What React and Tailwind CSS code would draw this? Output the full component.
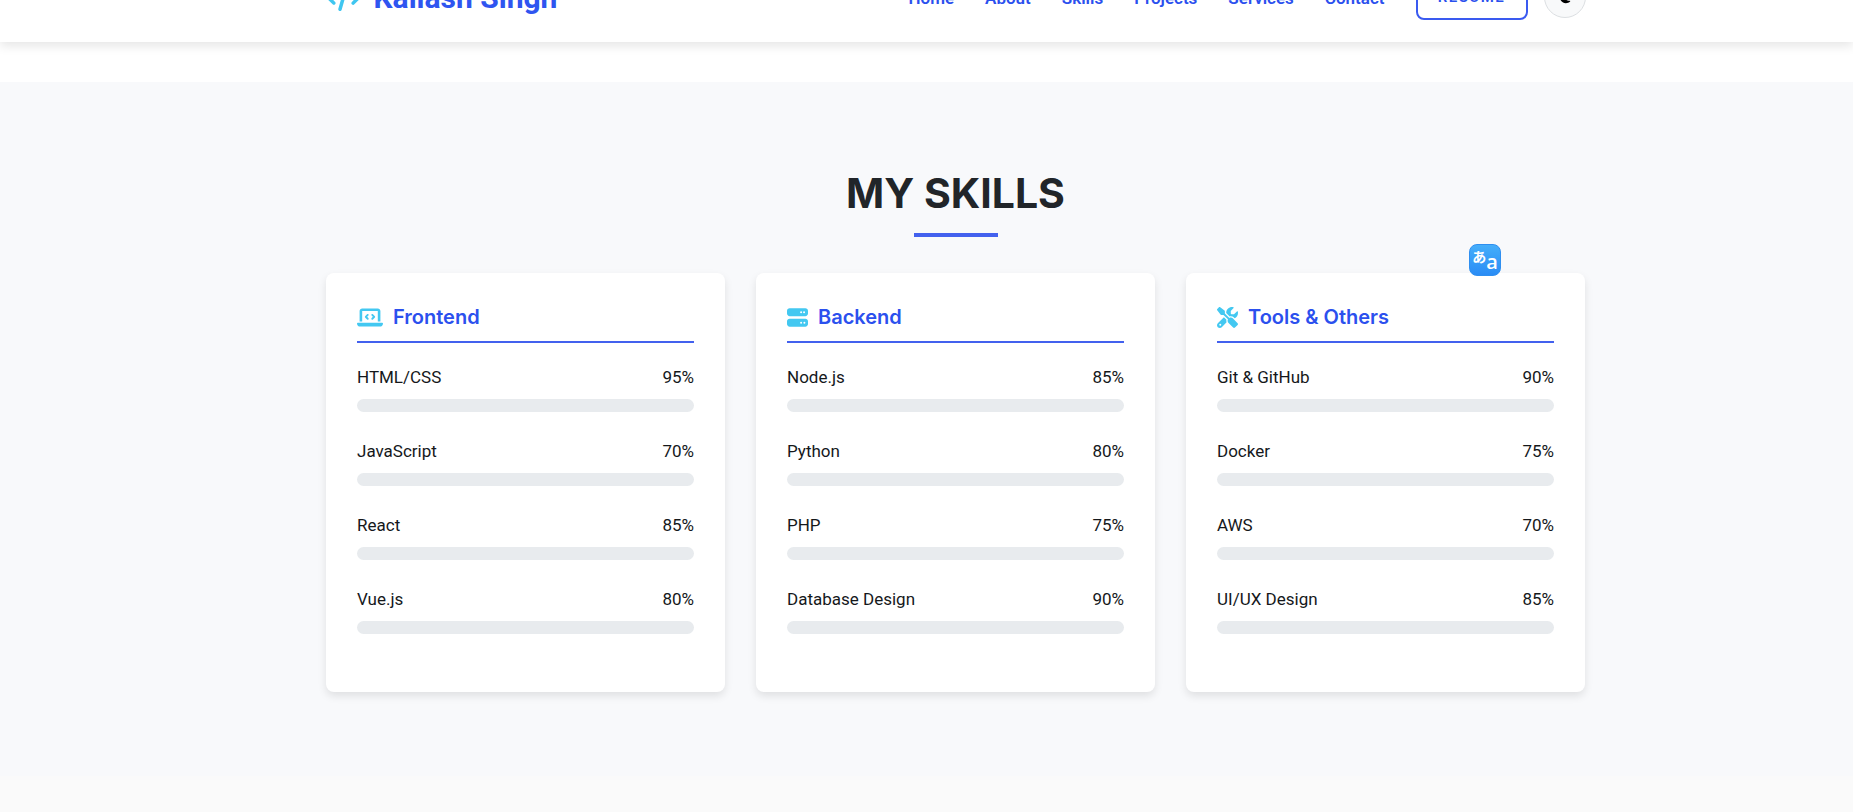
import { FaCode, FaMoon, FaLaptopCode, FaServer, FaScrewdriverWrench } from "react-icons/fa6";

const links = ["Home", "About", "Skills", "Projects", "Services", "Contact"];

const groups = [
  {
    title: "Frontend",
    Icon: FaLaptopCode,
    iconClass: "h-[21px] w-[26px]",
    skills: [["HTML/CSS", 95], ["JavaScript", 70], ["React", 85], ["Vue.js", 80]],
  },
  {
    title: "Backend",
    Icon: FaServer,
    iconClass: "size-[21px]",
    skills: [["Node.js", 85], ["Python", 80], ["PHP", 75], ["Database Design", 90]],
  },
  {
    title: "Tools & Others",
    Icon: FaScrewdriverWrench,
    iconClass: "size-[21px]",
    skills: [["Git & GitHub", 90], ["Docker", 75], ["AWS", 70], ["UI/UX Design", 85]],
  },
];

function Header() {
  return (
    <header className="relative -mt-12 bg-white pl-[58px] shadow-[0_4px_10px_rgba(0,0,0,0.1)]">
      <div className="mx-auto flex h-[90px] max-w-[1260px] items-center justify-between">
        <a href="#home" className="flex items-center gap-[13px] text-[30px] font-bold text-[#2f55f0]">
          <FaCode className="h-7 w-[35px] text-[#3fc6f0]" />
          Kailash Singh
        </a>
        <div className="flex items-center">
          <nav className="flex gap-[31px] pt-px text-[17px] leading-6 font-semibold text-[#2b50ee]">
            {links.map((l) => (
              <a key={l} href={"#" + l.toLowerCase()}>{l}</a>
            ))}
          </nav>
          <a
            href="#resume"
            className="ml-[31px] flex h-[46px] w-28 items-center justify-center rounded-lg border-2 border-[#3a5af0] text-[15px] font-semibold tracking-widest text-[#2b50ee]"
          >
            RESUME
          </a>
          <button
            type="button"
            aria-label="Toggle theme"
            className="ml-4 flex size-[42px] items-center justify-center rounded-full border border-[#dcdfe2] bg-[#f8f9fa] text-black"
          >
            <FaMoon className="size-3.5" />
          </button>
        </div>
      </div>
    </header>
  );
}

function TranslateButton() {
  return (
    <button
      type="button"
      aria-label="Translate"
      className="absolute -top-[29px] right-[84px] flex size-8 items-center justify-center rounded-lg border border-[#2f8ff0] bg-linear-to-b from-[#45aefa] to-[#2a8cf5] text-white"
    >
      <span className="mb-2 font-['Noto_Sans_CJK_JP',sans-serif] text-[14px] leading-[14px] font-bold">あ</span>
      <span className="mt-1 font-['Open_Sans',sans-serif] text-[20px] leading-4 font-semibold">a</span>
    </button>
  );
}

function Skill({ name, value }) {
  return (
    <div className="mb-[26px]">
      <div className="mb-2 flex justify-between text-[17px] leading-[27px] text-[#15181b]">
        <span>{name}</span>
        <span>{value}%</span>
      </div>
      <div role="progressbar" aria-label={name} aria-valuenow={value} className="h-[13px] rounded-full bg-[#e8ebee]" />
    </div>
  );
}

function Card({ title, Icon, iconClass, skills, children }) {
  return (
    <article className="relative rounded-lg bg-white px-[31px] pt-[31px] pb-8 shadow-[0_4px_8px_rgba(0,0,0,0.1)]">
      <h3 className="mb-[21px] flex items-center gap-[10px] border-b-2 border-[#4361ee] pb-[11px] font-['Inter',sans-serif] text-[20px] leading-[26px] font-semibold text-[#2b50ee]">
        <span className="text-[#43c8f1]">
          <Icon className={iconClass} />
        </span>
        {title}
      </h3>
      {skills.map(([name, value]) => (
        <Skill key={name} name={name} value={value} />
      ))}
      {children}
    </article>
  );
}

export default function App() {
  return (
    <div className="flex min-h-screen flex-col overflow-hidden bg-[#fafafa] font-['Roboto',sans-serif]">
      <Header />
      <main>
        <div className="h-10 bg-white" />
        <section id="skills" className="bg-[#f8f9fb] pt-[86px] pb-[84px] pl-[58px]">
          <h2 className="text-center font-['Inter',sans-serif] text-[41px] leading-[50px] font-bold text-[#212529]">
            MY SKILLS
          </h2>
          <div className="mx-auto mt-[15px] mb-9 h-1 w-[84px] bg-[#4361ee]" />
          <div className="mx-auto grid max-w-[1259px] grid-cols-3 gap-[31px]">
            {groups.map((g, i) => (
              <Card key={g.title} {...g}>
                {i === 2 && <TranslateButton />}
              </Card>
            ))}
          </div>
        </section>
      </main>
    </div>
  );
}
